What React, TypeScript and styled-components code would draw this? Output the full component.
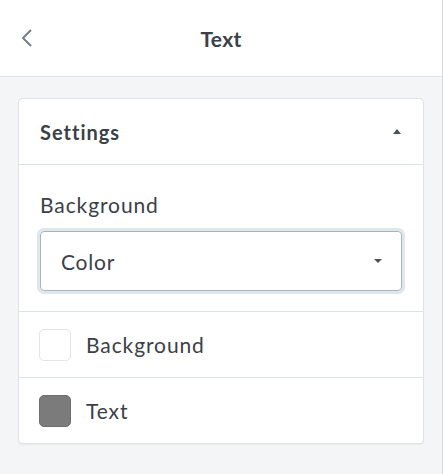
import styled, { createGlobalStyle } from "styled-components";

const GlobalStyle = createGlobalStyle`
  html, body {
    margin: 0;
    padding: 0;
    background: #f4f5f7;
  }
  body {
    font-family: Lato, "Noto Sans", sans-serif;
    color: #3b4048;
  }
`;

const Panel = styled.div`
  width: 442px;
  height: 474px;
  border-right: 1px solid #d6d9dd;
  background: #f4f5f7;
`;

const Header = styled.header`
  height: 76px;
  display: grid;
  grid-template-columns: 60px 1fr 60px;
  align-items: center;
  background: #fff;
  border-bottom: 1px solid #dfe4e9;
`;

const BackButton = styled.button`
  border: 0;
  background: none;
  padding: 0 0 0 20px;
  display: flex;
  align-items: center;
  color: #738089;
  cursor: pointer;
`;

const Title = styled.h1`
  margin: 0;
  font-size: 21px;
  font-weight: 700;
  letter-spacing: 0.3px;
  text-align: center;
  color: #3b4048;
`;

const Content = styled.div`
  padding: 21px 18px 0 18px;
`;

const Card = styled.section`
  background: #fff;
  border: 1px solid #dde3e8;
  border-radius: 4px;
  box-shadow: 0 1px 1px rgba(0, 0, 0, 0.04);
`;

const SectionHeader = styled.div`
  height: 65px;
  display: flex;
  align-items: center;
  justify-content: space-between;
  padding: 0 22px 0 21px;
  border-bottom: 1px solid #dde3e8;
  font-size: 20px;
  font-weight: 700;
  letter-spacing: 1px;
`;

const Caret = styled.span<{ up?: boolean }>`
  width: 0;
  height: 0;
  border-left: 4px solid transparent;
  border-right: 4px solid transparent;
  ${({ up }) =>
    up ? "border-bottom: 5px solid #4a5058;" : "border-top: 4px solid #4a5058;"}
`;

const Field = styled.div`
  padding: 28px 21px 20px 21px;
  border-bottom: 1px solid #dde3e8;
`;

const Label = styled.div`
  font-size: 21px;
  letter-spacing: 0.9px;
  line-height: 24px;
  margin-bottom: 14px;
`;

const Select = styled.div`
  height: 58px;
  display: flex;
  align-items: center;
  justify-content: space-between;
  padding: 0 19px 0 20px;
  border: 1px solid #a7b4be;
  border-radius: 4px;
  box-shadow: 0 0 0 3px #dfe6ec;
  font-size: 21px;
  letter-spacing: 0.8px;
`;

const ColorRow = styled.div<{ last?: boolean }>`
  height: 65px;
  display: flex;
  align-items: center;
  gap: 15px;
  padding: 0 20px;
  font-size: 21px;
  letter-spacing: 0.9px;
  border-bottom: ${({ last }) => (last ? "0" : "1px solid #dde3e8")};
`;

const Swatch = styled.span<{ color: string }>`
  width: 32px;
  height: 32px;
  box-sizing: border-box;
  border-radius: 5px;
  background: ${({ color }) => color};
  border: 1px solid ${({ color }) => (color === "#ffffff" ? "#e2e4e6" : "#6f6f6f")};
`;

const colors = [
  { name: "Background", value: "#ffffff" },
  { name: "Text", value: "#7b7b7b" },
];

export default function App() {
  return (
    <>
      <GlobalStyle />
      <Panel>
        <Header>
          <BackButton aria-label="Back">
            <svg width="14" height="20" viewBox="0 0 14 20" fill="none">
              <path d="M11 2 L3 10 L11 18" stroke="currentColor" strokeWidth="2" />
            </svg>
          </BackButton>
          <Title>Text</Title>
          <span />
        </Header>
        <Content>
          <Card>
            <SectionHeader>
              Settings
              <Caret up />
            </SectionHeader>
            <Field>
              <Label>Background</Label>
              <Select>
                Color
                <Caret />
              </Select>
            </Field>
            {colors.map((c, i) => (
              <ColorRow key={c.name} last={i === colors.length - 1}>
                <Swatch color={c.value} />
                {c.name}
              </ColorRow>
            ))}
          </Card>
        </Content>
      </Panel>
    </>
  );
}
